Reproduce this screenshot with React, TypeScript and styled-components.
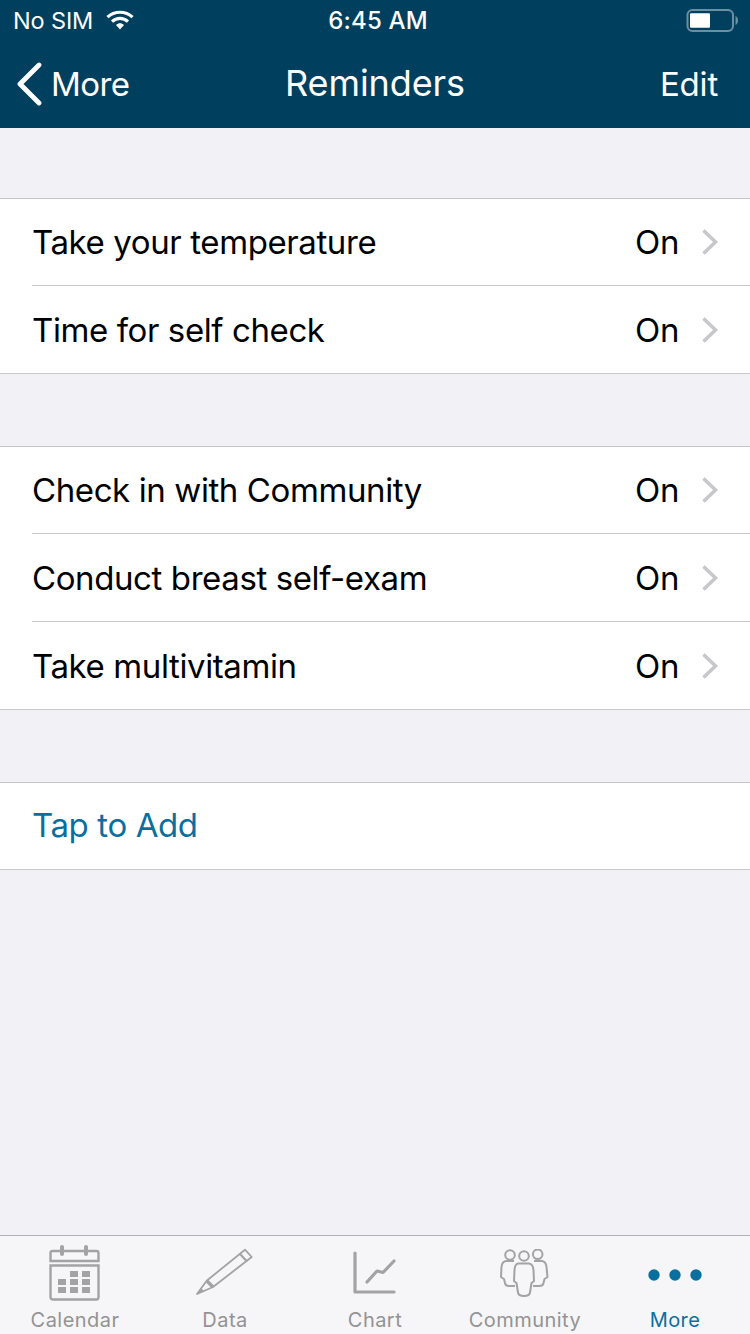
import React from 'react'
import styled, { createGlobalStyle } from 'styled-components'

const GlobalStyle = createGlobalStyle`
    html, body {
        margin: 0;
        padding: 0;
        background: #f1f1f6;
    }
    * {
        box-sizing: border-box;
    }
`

const sections = [
    ['Take your temperature', 'Time for self check'],
    ['Check in with Community', 'Conduct breast self-exam', 'Take multivitamin'],
]

const Chevron = () => (
    <ChevronIcon width="18" height="26" viewBox="0 0 18 26">
        <path d="M2.5 1.5 L14.5 13 L2.5 24.500" fill="none" stroke="#c8c8cc" strokeWidth="3.6" />
    </ChevronIcon>
)

const Wifi = () => (
    <svg width="28" height="20" viewBox="0 0 28 20">
        <path d="M1.5 7.2 C8.5 .6 19.5 .6 26.5 7.2" fill="none" stroke="#fff" strokeWidth="3.2" />
        <path d="M6 11.6 C10.8 7.4 17.2 7.4 22 11.6" fill="none" stroke="#fff" strokeWidth="3.2" />
        <path d="M10 15 C12.6 12.8 15.4 12.8 18 15 L14 19.4 Z" fill="#fff" />
    </svg>
)

const Battery = () => (
    <svg width="54" height="26" viewBox="0 0 54 26">
        <rect x="3.500" y="3" width="45.500" height="21" rx="5" fill="none" stroke="#fff" strokeOpacity="0.42" strokeWidth="2" />
        <rect x="6" y="6.300" width="20" height="14.500" rx="1" fill="#fff" />
        <path d="M51.500 9 C53.300 9.600 54 11.500 54 13.500 C54 15.500 53.300 17.400 51.500 18 Z" fill="#fff" fillOpacity="0.42" />
    </svg>
)

const CalendarIcon = () => (
    <svg width="52" height="58" viewBox="0 0 52 58">
        <g fill="none" stroke="#a3a3a3" strokeWidth="2.4">
            <path d="M1.500 17 V9 Q1.500 7 3.500 7 H47.500 Q49.500 7 49.500 9 V17 Z" />
            <path d="M1.500 21.500 H49.500 V53 Q49.500 55.500 47.500 55.500 H3.500 Q1.500 55.500 1.500 53 Z" />
        </g>
        <g fill="#a3a3a3">
            <rect x="11" y="1" width="4" height="11" rx="2" />
            <rect x="35" y="1" width="4" height="11" rx="2" />
            <rect x="21" y="27" width="8" height="6" />
            <rect x="33" y="27" width="8" height="6" />
            <rect x="9" y="35" width="8" height="6" />
            <rect x="21" y="35" width="8" height="6" />
            <rect x="33" y="35" width="8" height="6" />
            <rect x="9" y="43" width="8" height="6" />
            <rect x="21" y="43" width="8" height="6" />
            <rect x="33" y="43" width="8" height="6" />
        </g>
    </svg>
)

const PencilIcon = () => (
    <svg width="58" height="50" viewBox="0 0 58 50">
        <g fill="none" stroke="#a3a3a3" strokeWidth="1.800" strokeLinejoin="round">
            <path d="M1 46 L10.700 32.700 L49 1.700 L55.700 9 L17 39 Z" />
            <path d="M10.700 32.700 L17 39" strokeWidth="3.400" />
            <path d="M44 6 L51 13.500" strokeWidth="2.200" />
        </g>
        <path d="M1 46 L5 40 L8.500 43.500 Z" fill="#a3a3a3" />
    </svg>
)

const ChartIcon = () => (
    <svg width="44" height="44" viewBox="0 0 44 44">
        <path d="M2 2 V41 H41" fill="none" stroke="#a3a3a3" strokeWidth="3.2" strokeLinecap="round" strokeLinejoin="round" />
        <path d="M14 31 L24 20 L30 21.500 L41 10" fill="none" stroke="#a3a3a3" strokeWidth="3.200" strokeLinecap="round" strokeLinejoin="round" />
    </svg>
)

const CommunityIcon = () => (
    <svg width="50" height="48" viewBox="0 0 50 48">
        <g fill="none" stroke="#a3a3a3" strokeWidth="2" strokeLinejoin="round">
            <circle cx="10" cy="6" r="4.800" />
            <circle cx="37.700" cy="5.300" r="4.800" />
            <circle cx="24" cy="7" r="4.800" />
            <path d="M14 12 H6 Q2 12.500 1.500 18 L1 28 L4 30 L5 34 Q5.500 37 9 37 H15" />
            <path d="M34 12 H42 Q46 12.500 46.500 18 L47.500 28 L44.500 30 L43.500 34 Q43 37 39 37 H33" />
            <path d="M18 14.500 H29 Q33 15 33.500 21 L34 32 L31.500 34 L30 43.500 Q29.500 47 24 47 Q18.500 47 18 43.500 L16.500 34 L14 32 L14.500 21 Q15 15 18 14.500 Z" />
        </g>
    </svg>
)

const DotsIcon = () => (
    <svg width="54" height="12" viewBox="0 0 54 12">
        <circle cx="6" cy="6" r="5.700" fill="#0a6f9f" />
        <circle cx="27" cy="6" r="5.700" fill="#0a6f9f" />
        <circle cx="48" cy="6" r="5.700" fill="#0a6f9f" />
    </svg>
)

const tabs = [
    { label: 'Calendar', icon: <CalendarIcon /> },
    { label: 'Data', icon: <PencilIcon /> },
    { label: 'Chart', icon: <ChartIcon /> },
    { label: 'Community', icon: <CommunityIcon /> },
    { label: 'More', icon: <DotsIcon />, active: true },
]

const App = () => {
    return (
        <Screen>
            <GlobalStyle />
            <Header>
                <StatusBar>
                    <StatusLeft>
                        <span>No SIM</span>
                        <Wifi />
                    </StatusLeft>
                    <Clock>6:45 AM</Clock>
                    <StatusRight>
                        <Battery />
                    </StatusRight>
                </StatusBar>
                <NavBar>
                    <BackButton>
                        <svg width="26" height="44" viewBox="0 0 26 44">
                            <path
                                d="M23 3 L4 22 L23 41"
                                fill="none"
                                stroke="#fff"
                                strokeWidth="4.800"
                                strokeLinecap="round"
                                strokeLinejoin="round"
                            />
                        </svg>
                        <span>More</span>
                    </BackButton>
                    <Title>Reminders</Title>
                    <EditButton>Edit</EditButton>
                </NavBar>
            </Header>
            <Content>
                {sections.map((rows) => (
                    <Section key={rows[0]}>
                        {rows.map((row) => (
                            <Row key={row}>
                                <RowLabel>{row}</RowLabel>
                                <RowValue>On</RowValue>
                                <Chevron />
                            </Row>
                        ))}
                    </Section>
                ))}
                <Section>
                    <Row>
                        <RowLabel $link>Tap to Add</RowLabel>
                    </Row>
                </Section>
            </Content>
            <TabBar>
                {tabs.map((tab) => (
                    <Tab key={tab.label}>
                        <TabIcon $active={tab.active}>{tab.icon}</TabIcon>
                        <TabLabel $active={tab.active}>{tab.label}</TabLabel>
                    </Tab>
                ))}
            </TabBar>
        </Screen>
    )
}

export default App

const Screen = styled.div`
    width: 750px;
    height: 1334px;
    display: flex;
    flex-direction: column;
    overflow: hidden;
    background: #f1f1f6;
    font-family: Inter, 'Liberation Sans', sans-serif;
`

const Header = styled.div`
    height: 128px;
    background: #00405e;
    color: #fff;
`

const StatusBar = styled.div`
    height: 40px;
    padding: 0 12px 0 13px;
    display: grid;
    grid-template-columns: 1fr auto 1fr;
    align-items: center;
    font-size: 24px;
`

const StatusLeft = styled.div`
    display: flex;
    align-items: center;
    gap: 13px;
    font-size: 23.5px;
    letter-spacing: -0.15px;
`

const Clock = styled.div`
    font-weight: 500;
    letter-spacing: 0.2px;
    margin-left: 5px;
`

const StatusRight = styled.div`
    display: flex;
    justify-content: flex-end;
    svg {
        display: block;
    }
`

const NavBar = styled.div`
    height: 88px;
    padding: 0 32px;
    display: grid;
    grid-template-columns: 1fr auto 1fr;
    align-items: center;
    font-size: 33px;
`

const BackButton = styled.div`
    display: flex;
    align-items: center;
    gap: 9px;
    margin-left: -16px;
    letter-spacing: -0.6px;
`

const Title = styled.div`
    font-size: 36px;
    font-weight: 400;
    letter-spacing: -0.1px;
    margin-top: -2px;
`

const EditButton = styled.div`
    text-align: right;
    letter-spacing: -0.2px;
`

const Content = styled.div`
    flex: 1;
    padding-top: 70px;
    display: flex;
    flex-direction: column;
    gap: 72px;
`

const Section = styled.div`
    background: #fff;
    border-top: 1px solid #c8c7cc;
    border-bottom: 1px solid #c8c7cc;
`

const Row = styled.div`
    height: 88px;
    margin-left: 32px;
    padding-right: 31px;
    display: flex;
    align-items: center;
    border-bottom: 1px solid #c8c7cc;
    &:first-child {
        height: 87px;
    }
    &:last-child {
        height: 87px;
        border-bottom: 0;
    }
    &:only-child {
        height: 86px;
    }
`

const RowLabel = styled.div<{ $link?: boolean }>`
    flex: 1;
    font-size: 33px;
    letter-spacing: -0.4px;
    margin-top: ${(props) => (props.$link ? '-2px' : '0')};
    color: ${(props) => (props.$link ? '#0a6f9f' : '#000')};
`

const RowValue = styled.div`
    font-size: 33px;
    letter-spacing: -0.4px;
    color: #000;
`

const ChevronIcon = styled.svg`
    margin-left: 22px;
`

const TabBar = styled.div`
    height: 99px;
    display: grid;
    grid-template-columns: repeat(5, 150px);
    background: #f6f6f9;
    border-top: 1px solid #b2b2b2;
`

const Tab = styled.div`
    display: flex;
    flex-direction: column;
    align-items: center;
    padding-top: 4px;
`

const TabIcon = styled.div<{ $active?: boolean }>`
    height: 66px;
    padding-top: ${(props) => (props.$active ? '4px' : '0')};
    display: flex;
    align-items: center;
    justify-content: center;
`

const TabLabel = styled.div<{ $active?: boolean }>`
    margin-top: 2px;
    font-size: 20px;
    font-weight: 400;
    letter-spacing: 0.45px;
    color: ${(props) => (props.$active ? '#0a6f9f' : '#939393')};
`
